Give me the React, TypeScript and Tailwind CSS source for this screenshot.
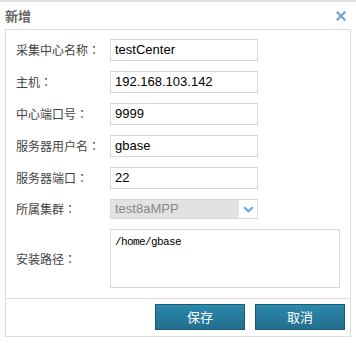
import React from "react";

const cjk = { fontFamily: '"Noto Sans CJK SC", "Noto Sans", sans-serif' };
const latin = { fontFamily: '"Liberation Sans", "Noto Sans CJK SC", sans-serif' };

function Label({ text }: { text: string }) {
  return (
    <div className="w-[94px] shrink-0 text-[12px] text-[#444]" style={cjk}>
      {text}
      <span style={{ fontFamily: '"Noto Sans CJK TC", sans-serif' }}>：</span>
    </div>
  );
}

function Row({ label, value }: { label: string; value: string }) {
  return (
    <div className="flex items-center h-[22px]">
      <Label text={label} />
      <div className="w-[148px] h-[22px] border border-[#d9d9d9] bg-white flex items-center pl-[4px] text-[13px] text-black" style={latin}>
        {value}
      </div>
    </div>
  );
}

export default function App() {
  return (
    <div className="w-[356px] h-[343px] bg-white border-t-2 border-[#dedede] overflow-hidden">
      <div className="h-[27px] flex items-center justify-between pl-[5px] pr-[10px]">
        <span className="text-[13px] font-bold text-[#666]" style={cjk}>新增</span>
        <svg width="10" height="10" viewBox="0 0 10 10" className="mt-[1px]">
          <path d="M1.5 1.5 L8.5 8.5 M8.5 1.5 L1.5 8.5" stroke="#6f9fd6" strokeWidth="2.2" strokeLinecap="square" />
        </svg>
      </div>
      <div className="mx-[5px] w-[346px] h-[308px] border border-[#dcdcdc] flex flex-col">
        <div className="flex flex-col gap-[10px] pt-[9px] pl-[10px] pb-[10px]">
          <Row label="采集中心名称" value="testCenter" />
          <Row label="主机" value="192.168.103.142" />
          <Row label="中心端口号" value="9999" />
          <Row label="服务器用户名" value="gbase" />
          <Row label="服务器端口" value="22" />
          <div className="flex items-center h-[20px]">
            <Label text="所属集群" />
            <div className="w-[148px] h-[20px] border border-[#d9d9d9] flex">
              <div className="flex-1 bg-[#e2e2e2] flex items-center pl-[4px] text-[13px] text-[#888]" style={latin}>test8aMPP</div>
              <div className="w-[18px] bg-white flex items-center justify-center">
                <svg width="11" height="7" viewBox="0 0 11 7">
                  <path d="M1.2 1.2 L5.5 5.3 L9.8 1.2" stroke="#5aaae6" strokeWidth="2" fill="none" />
                </svg>
              </div>
            </div>
          </div>
          <div className="flex items-center h-[59px]">
            <Label text="安装路径" />
            <div
              className="w-[230px] h-[59px] border border-[#d9d9d9] bg-white pl-[4px] pt-[6px] text-[11px] leading-[12px] tracking-[-0.6px] text-black"
              style={{ fontFamily: '"Liberation Mono", monospace' }}
            >
              /home/gbase
            </div>
          </div>
        </div>
        <div className="border-t border-[#dcdcdc] flex justify-end gap-[10px] pt-[5px] pr-[5px]">
          <button className="w-[90px] h-[26px] bg-gradient-to-b from-[#2c89ab] to-[#216f8d] border border-[#1c5b74] text-white text-[13px]" style={cjk}>保存</button>
          <button className="w-[90px] h-[26px] bg-gradient-to-b from-[#2c89ab] to-[#216f8d] border border-[#1c5b74] text-white text-[13px]" style={cjk}>取消</button>
        </div>
      </div>
    </div>
  );
}
